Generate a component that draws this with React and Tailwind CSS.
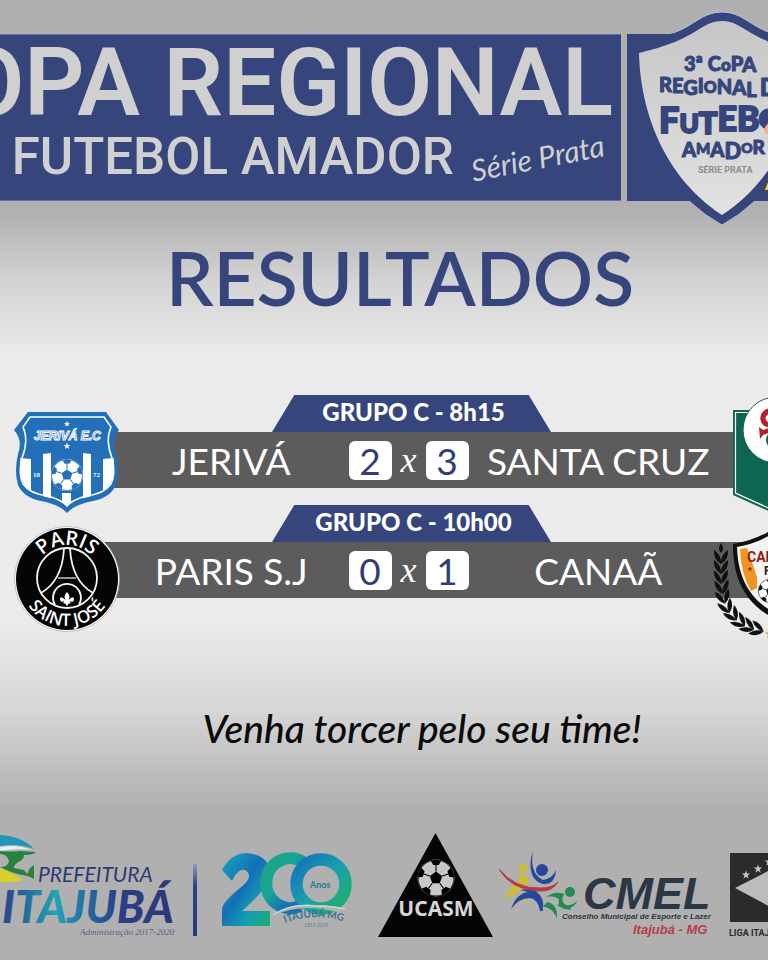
import React from "react";

const NAVY = "#36467d";

function Ball({ cx, cy, r, dark = "#000", light = "#dcdcdc" }) {
  const spokes = [0, 72, 144, 216, 288];
  return (
    <g transform={`translate(${cx} ${cy}) scale(${r / 20})`}>
      <circle r="20" fill={light} />
      <polygon points="0,-7 6.7,-2.2 4.1,5.7 -4.1,5.7 -6.7,-2.2" fill={dark} />
      {spokes.map((a) => (
        <g key={a} transform={`rotate(${a})`}>
          <path d="M0 -7V-14" stroke={dark} strokeWidth="1.2" />
          <path d="M-5.500 -18.5Q0 -20.500 5.500 -18.5L3 -14H-3Z" fill={dark} />
        </g>
      ))}
      <circle r="19.5" fill="none" stroke={dark} strokeWidth="1" />
    </g>
  );
}

function Star({ x, y, s, fill }) {
  return (
    <polygon
      transform={`translate(${x} ${y}) scale(${s})`}
      points="0,-10 2.4,-3.1 9.5,-3.1 3.8,1.2 5.9,8.1 0,4 -5.9,8.1 -3.8,1.2 -9.5,-3.1 -2.4,-3.1"
      fill={fill}
    />
  );
}

function CupShield() {
  return (
    <svg className="absolute -top-[34px] left-[3px] h-[230px] w-[190px]" viewBox="630 0 190 230" role="img" aria-label="3ª Copa Regional de Futebol Amador">
      <defs>
        <linearGradient id="cup" x1="0" y1="0" x2="0" y2="1">
          <stop offset="0" stopColor="#c6c6c6" />
          <stop offset="1" stopColor="#e2e2e2" />
        </linearGradient>
      </defs>
      <path d="M722 12C702 12 694 26 673 33L631 48C632 95 648 155 689 201Q705 216 722 225Q739 216 755 201C796 155 812 95 813 48L771 33C750 26 742 12 722 12Z" fill={NAVY} />
      <path d="M673 33C694 26 702 12 722 12S750 26 771 33M689 201Q705 216 722 225Q739 216 755 201" fill="none" stroke="#b9c4de" strokeWidth="1" />
      <path d="M722 21C706 21 699 32 675 42Q657 49 639 53C640 100 657 172 722 215C787 172 804 100 805 53Q787 49 769 42C745 32 738 21 722 21Z" fill="url(#cup)" />
      <g fill={NAVY} stroke={NAVY} strokeWidth="1" strokeLinejoin="round" fontFamily="Lato, sans-serif" fontWeight="900">
        <text x="684" y="71" fontSize="20">3ª C<tspan fontSize="17">o</tspan>P<tspan dy="1">A</tspan></text>
        <text x="659" y="92" fontSize="20">R<tspan dy="1">E</tspan><tspan dy="2">G</tspan><tspan dy="-2">I</tspan><tspan fontSize="16">O</tspan><tspan dy="1">N</tspan><tspan dy="1">A</tspan><tspan dy="2">L</tspan><tspan dx="3" dy="-1" fontSize="24">D</tspan></text>
        <text x="659" y="133" fontSize="36" strokeWidth="2">F<tspan fontSize="26">U</tspan><tspan dy="1" fontSize="31">T</tspan><tspan dy="-3" fontSize="34">E</tspan><tspan fontSize="34">B</tspan></text>
        <ellipse cx="768" cy="119" rx="9" ry="10" />
        <text x="682" y="157" fontSize="20">A<tspan fontSize="15" dy="-3">M</tspan><tspan dy="3">A</tspan><tspan dy="2" fontSize="22">D</tspan><tspan fontSize="14" dy="-6">O</tspan><tspan dy="1" fontSize="19">R</tspan></text>
      </g>
      <text x="698" y="173" fontSize="9" fontWeight="700" fill="#8d8f91" fontFamily="Roboto, sans-serif">SÉRIE PRATA</text>
      <path d="M764 132q0-7 7-11v16z" fill="#e9b48f" />
      <path d="M764 191l4-10 4 0v8z" fill="#f2d13a" stroke="#222" strokeWidth=".6" />
    </svg>
  );
}

function JerivaCrest() {
  return (
    <svg className="absolute -top-6 left-3 h-[108px] w-[110px]" viewBox="12 408 110 108" role="img" aria-label="Jerivá E.C">
      <defs>
        <clipPath id="jbody">
          <path d="M22 421Q27 428 25 438Q19 455 20 470Q22 492 42 496Q60 500 67 506Q74 500 92 496Q112 492 114 470Q115 455 109 438Q107 428 112 421Z" />
        </clipPath>
      </defs>
      <path d="M28 412H106L119 430Q111 440 116 454Q120 472 116 485Q110 499 88 502Q73 506 67 513Q61 506 46 502Q24 499 18 485Q14 472 18 454Q23 440 14 430Z" fill="#2470b8" />
      <path d="M30 417H104L111 427Q105 440 112 458Q116 474 111 484Q104 494 86 496Q72 500 67 506Q62 500 48 496Q30 494 23 484Q18 474 22 458Q29 440 23 427Z" fill="none" stroke="#fff" strokeWidth="1.5" />
      <g clipPath="url(#jbody)" fill="#fff">
        <path d="M20 458l11 1V500H20zM43 454l8-1V504H43zM62 493h9V512H62zM83 453l8 1V504H83zM103 459l11-1V500H103z" />
      </g>
      <Ball cx={67} cy={475} r={16} dark="#2470b8" light="#fff" />
      <g fill="#fff">
        <Star x={67} y={424} s={0.32} fill="#fff" />
        <Star x={67} y={446} s={0.36} fill="#fff" />
        <text x="34" y="440" fontSize="12" fontWeight="700" fontStyle="italic" fontFamily="'Liberation Sans', sans-serif" fill="#2470b8" stroke="#fff" strokeWidth="1">JERIVÁ E.C</text>
        <text x="33" y="477" fontSize="7" fontWeight="700" fontFamily="'Liberation Serif', serif">18</text>
        <text x="93" y="477" fontSize="7" fontWeight="700" fontFamily="'Liberation Serif', serif">72</text>
      </g>
    </svg>
  );
}

function ParisCrest() {
  return (
    <svg className="absolute -top-[18px] left-3 h-[110px] w-[110px]" viewBox="12 524 110 110" role="img" aria-label="Paris Saint José">
      <defs>
        <path id="ptop" d="M33 579A34 34 0 0 1 101 579" />
        <path id="pbot" d="M20 579A47 47 0 0 0 114 579" />
      </defs>
      <circle cx="67" cy="579" r="52.500" fill="#fff" stroke="#9a9a9a" strokeWidth=".6" />
      <circle cx="67" cy="579" r="51" fill="#050505" />
      <g fill="#fff" textAnchor="middle">
        <text fontSize="20" fontFamily="'Open Sans', sans-serif" fontWeight="600"><textPath href="#ptop" startOffset="50%">PARIS</textPath></text>
        <text fontSize="17" fontFamily="'Open Sans', sans-serif" fontWeight="600"><textPath href="#pbot" startOffset="50%">SAINT JOSÉ</textPath></text>
      </g>
      <g fill="none" stroke="#f4f4f4">
        <circle cx="67" cy="578" r="30" strokeWidth="1.800" />
        <path d="M64 549Q62 581 41 593M70 549Q72 581 93 593" strokeWidth="1.800" />
        <path d="M58 578H76" strokeWidth="1.200" />
        <path d="M55 605A14 14 0 1 1 79 605" strokeWidth="1.800" />
      </g>
      <path d="M67 592q4 4 1.500 8q5-5 5.500-1q0 3-3 3q1-2-1.500 0h1v1.500h-2l-1.500 3-1.500-3h-2V602h1q-2.500-2-1.500 0q-3 0-3-3q.5-4 5.500 1q-2.500-4 1.500-8z" fill="#fff" />
    </svg>
  );
}

function SantaCruzCrest() {
  return (
    <svg className="absolute -top-9 left-0 h-[120px] w-[90px]" viewBox="732 396 90 120" role="img" aria-label="Santa Cruz">
      <path d="M733 410H817V495L775 514L733 495Z" fill="#0e6650" />
      <path d="M735.500 412.500H815V493L775 511L735.500 493Z" fill="none" stroke="#fff" strokeWidth="1.200" />
      <circle cx="776" cy="430" r="33" fill="#fff" stroke="#0e6650" strokeWidth="1" />
      <path d="M772 408C757 408 757 427 769 427L772 423C763 423 764 413 772 414Z" fill="#b3232c" />
      <path d="M759 427l4 3 6-2 2 4-8 3-3 4z" fill="#b3232c" />
      <circle cx="775" cy="440" r="9" fill="#0e6650" />
    </svg>
  );
}

function CanaaCrest() {
  const leaves = [
    [721, 556, 0], [721, 566, 0], [721, 576, -2], [722, 586, -6], [723, 596, -14],
    [726, 606, -24], [732, 614, -36], [739, 621, -48], [747, 626, -60], [756, 629, -72],
  ];
  return (
    <svg className="absolute -top-[18px] -left-5 h-[120px] w-[120px]" viewBox="712 524 120 120" role="img" aria-label="Canaã F.C.">
      <path d="M777 526Q758 540 733 544C733 578 744 604 777 620C810 604 821 578 821 544Q796 540 777 526Z" fill="#101010" />
      <path d="M777 531Q759 543 737 547C738 577 749 600 777 614C805 600 816 577 817 547Q795 543 777 531Z" fill="#f6f4f1" />
      <path d="M740 549L747 548L757 577V588L751 591Q741 574 740 549Z" fill="#f2941f" />
      <Star x={750} y={569} s={0.26} fill="#8a1f24" />
      <text x="747" y="562" fontSize="14" fontWeight="700" fill="#8a1f24" fontFamily="Roboto, sans-serif">CANAÃ</text>
      <text x="764" y="575" fontSize="12" fontWeight="700" fill="#222" fontFamily="Roboto, sans-serif">F.C.</text>
      <Ball cx={770} cy={591} r={12} dark="#151515" light="#fff" />
      <path d="M721 543q4 6 0 10q-4-4 0-10z" fill="#111" />
      {leaves.map(([x, y, a]) => (
        <g key={x + y} transform={`translate(${x} ${y}) rotate(${a})`} fill="#111">
          <path d="M0 5Q-1-2-7-6Q-8 3 0 8Z" />
          <path d="M0 5Q1-2 7-6Q8 3 0 8Z" />
        </g>
      ))}
      <Star x={770} y={634} s={0.55} fill="#eda23a" />
    </svg>
  );
}

function Match({ label, home, away, homeGoals, awayGoals, homeCrest, awayCrest }) {
  return (
    <article>
      <div className="flex justify-center pl-[55px]">
        <h3 className="flex h-[37px] w-[279px] items-center justify-center bg-[#36467d] pb-1 pl-1 text-[24px] leading-7 font-black text-white [clip-path:polygon(8%_0,92%_0,100%_100%,0_100%)]">
          {label}
        </h3>
      </div>
      <div className="relative grid h-14 grid-cols-[118px_7fr_120px_8fr_36px] items-center">
        <div className="absolute inset-y-0 right-0 left-[60px] bg-[#5c5c5c]" />
        <div className="relative h-full">{homeCrest}</div>
        <span className="relative pr-1 text-center text-[37px] leading-none whitespace-nowrap text-white">{home}</span>
        <div className="relative flex items-center justify-between">
          <span className="flex h-[39px] w-[43px] items-center justify-center rounded-md bg-white text-[37px] leading-none text-[#2f3f76]">{homeGoals}</span>
          <span className="font-[Liberation_Serif,serif] text-[36px] leading-none text-white italic">x</span>
          <span className="flex h-[39px] w-[43px] items-center justify-center rounded-md bg-white text-[37px] leading-none text-[#2f3f76]">{awayGoals}</span>
        </div>
        <span className="relative pr-1 text-center text-[37px] leading-none whitespace-nowrap text-white">{away}</span>
        <div className="relative h-full">{awayCrest}</div>
      </div>
    </article>
  );
}

function PrefeituraLogo() {
  return (
    <svg className="h-[110px] w-[180px] shrink-0" viewBox="0 830 180 110" role="img" aria-label="Prefeitura Itajubá">
      <defs>
        <linearGradient id="ita" gradientUnits="userSpaceOnUse" x1="0" y1="0" x2="175" y2="0">
          <stop offset="0" stopColor="#2b3f86" />
          <stop offset=".14" stopColor="#246a9c" />
          <stop offset=".32" stopColor="#20a3b5" />
          <stop offset=".5" stopColor="#2569a3" />
          <stop offset=".68" stopColor="#2b3f86" />
          <stop offset="1" stopColor="#2b3877" />
        </linearGradient>
      </defs>
      <path d="M0 835Q22 836 34 849Q18 843 0 846Z" fill="#2196b8" />
      <path d="M0 847Q17 844 32 850Q16 848 0 851Z" fill="#e5eff0" />
      <path d="M0 851Q14 852 20 851L36 852Q34 855 24 855Q24 859 20 861Q13 865 14 868L24 870L27 874L30 868L34 865V879L28 876Q13 874 0 867Q8 867 9 861Q7 854 0 854Z" fill="#27823f" />
      <path d="M0 868Q11 872 23 880Q16 883 0 882Z" fill="#d9cf2a" />
      <text x="38" y="882" fontSize="21" fontStyle="italic" fill="#2c3973" fontFamily="Lato, sans-serif">PREFEITURA</text>
      <text x="2" y="923" fontSize="45" fontStyle="italic" fontWeight="900" fill="url(#ita)" fontFamily="Lato, sans-serif">ITAJUBÁ</text>
      <text x="80" y="935" fontSize="9" fontStyle="italic" fill="#56617f" fontFamily="'Liberation Serif', serif">Administração 2017-2020</text>
    </svg>
  );
}

function BicentenaryLogo() {
  return (
    <svg className="h-[90px] w-[140px] shrink-0" viewBox="220 850 140 90" role="img" aria-label="200 anos Itajubá MG">
      <defs>
        <linearGradient id="two" x1="0" y1="0" x2="1" y2="1">
          <stop offset="0" stopColor="#14a6c0" />
          <stop offset=".45" stopColor="#1470b6" />
          <stop offset=".7" stopColor="#129db4" />
          <stop offset="1" stopColor="#20ad72" />
        </linearGradient>
        <linearGradient id="zero" x1="0" y1="0" x2="1" y2="1">
          <stop offset="0" stopColor="#1fa38a" />
          <stop offset=".4" stopColor="#17a596" />
          <stop offset=".7" stopColor="#1773b4" />
          <stop offset="1" stopColor="#1773b4" />
        </linearGradient>
        <linearGradient id="zeroEnd" x1="0" y1="0" x2="1" y2="1">
          <stop offset="0" stopColor="#1672b8" />
          <stop offset=".5" stopColor="#1a9fae" />
          <stop offset="1" stopColor="#1fb164" />
        </linearGradient>
        <path id="itaArc" d="M285 923Q315 911 352 924" />
      </defs>
      <path d="M222 870Q231 853 247 853Q270 855 270 874Q269 888 242 911H270V926H222V908Q224 901 240 888Q250 880 249 875Q247 869 241 870Q236 872 232 881Z" fill="url(#two)" />
      <path d="M303 862A24 25 0 1 0 300 906" fill="none" stroke="url(#zero)" strokeWidth="12" />
      <circle cx="321" cy="884" r="24.500" fill="none" stroke="url(#zeroEnd)" strokeWidth="12.500" />
      <path d="M272 917Q290 902 315 905Q335 905 347 910L340 913Q315 906 296 909Q282 911 272 917Z" fill="#b0b0b0" />
      <path d="M273 915Q290 903 315 906Q333 906 345 909" fill="none" stroke="#c5d8df" strokeWidth="1.500" />
      <text x="310" y="888" fontSize="9" fontWeight="700" fill="#207a98" fontFamily="Lato, sans-serif">Anos</text>
      <text fontSize="10" fontWeight="700" fill="#3c7293" fontFamily="Lato, sans-serif"><textPath href="#itaArc">ITAJUBÁ MG</textPath></text>
      <text x="304" y="927" fontSize="5" fill="#5f8598" fontFamily="Lato, sans-serif">1819 2019</text>
    </svg>
  );
}

function UcasmLogo() {
  return (
    <svg className="h-[104px] w-[116px] shrink-0" viewBox="378 833 116 104" role="img" aria-label="UCASM">
      <path d="M435.500 833L493 937H378Z" fill="#050505" />
      <Ball cx={436} cy={878} r={18.5} light="#c8c8c8" />
      <text x="436" y="916" fontSize="21" fontWeight="700" fill="#d6d6d6" textAnchor="middle" fontFamily="'Noto Sans', sans-serif">UCASM</text>
    </svg>
  );
}

function CmelLogo() {
  return (
    <svg className="h-[90px] w-[220px] shrink-0" viewBox="498 850 220 90" role="img" aria-label="CMEL">
      <g fill="#cbbd35">
        <circle cx="523" cy="868" r="4.500" />
        <path d="M518 874Q530 873 528 884Q525 889 515 889Q508 893 503 902Q506 889 515 885L520 880ZM513 887Q519 886 520 892Q512 894 507 901Q511 894 513 887ZM524 889L526 902L523 903Z" />
      </g>
      <g fill="#27479c">
        <circle cx="542" cy="870" r="6" />
        <path d="M533 851Q529 873 543 880Q553 878 556 870Q555 885 543 884Q528 880 531 858ZM511 909Q517 892 530 892Q543 893 543 911L540 911Q538 899 530 898Q519 898 511 909ZM520 890Q533 887 537 892Q544 898 543 907Q538 893 520 890Z" />
      </g>
      <path d="M499 869Q515 889 541 888Q552 888 558 882Q552 892 539 891Q511 890 499 869Z" fill="#b83843" stroke="#b83843" strokeWidth="1" />
      <g fill="#238a50">
        <circle cx="570" cy="892" r="5" />
        <path d="M545 898Q555 890 564 894Q560 902 566 905Q573 906 578 900Q574 909 564 909Q557 905 559 899Q551 894 545 898ZM547 902Q558 904 557 918Q552 907 541 906Q545 906 547 902ZM560 904Q571 906 571 910Q562 909 557 905Z" />
      </g>
      <g fontFamily="'Liberation Sans', sans-serif" fontWeight="700" fontStyle="italic">
        <text x="583" y="909" fontSize="45" fill="#2b3744">CMEL</text>
        <text x="562" y="919" fontSize="8" fill="#2b3744">Conselho Municipal de Esporte e Lazer</text>
        <text x="633" y="934" fontSize="13" fill="#b83b46">Itajubá - MG</text>
      </g>
    </svg>
  );
}

function LigaLogo() {
  return (
    <svg className="h-[90px] w-[90px] shrink-0" viewBox="729 850 90 90" role="img" aria-label="Liga Itajubense">
      <rect x="730" y="853" width="78" height="69" fill="#2c2a2b" />
      <path d="M735 888L778 866V911Z" fill="#bcbcbc" />
      <Star x={746} y={875} s={0.45} fill="#c4c4c4" />
      <Star x={758} y={869} s={0.45} fill="#c4c4c4" />
      <Star x={769} y={862} s={0.45} fill="#c4c4c4" />
      <text x="729" y="936" fontSize="9" fontWeight="700" fill="#2c2a2b" fontFamily="Roboto, sans-serif">LIGA ITAJ</text>
    </svg>
  );
}

export default function App() {
  return (
    <main className="min-h-screen w-full overflow-hidden bg-[linear-gradient(180deg,#b0b0b0_0,#b0b0b0_22%,#d2d2d2_29%,#ebebeb_37%,#ebebeb_65%,#d6d6d6_74%,#b0b0b0_84%,#b0b0b0_100%)] pt-[34px] font-[Lato,sans-serif]">
      <header className="grid h-[167px] grid-cols-[minmax(0,1fr)_141px] gap-[6px] text-[#d0d0d0]">
        <div className="overflow-hidden border-y border-[#5d6fa5] bg-[#36467d] pr-2">
          <h1 className="flex justify-end text-[94px] leading-[96px] font-semibold whitespace-nowrap font-[Roboto,sans-serif]">OPA REGIONAL</h1>
          <div className="flex items-center justify-end gap-4 pr-2 whitespace-nowrap">
            <p className="text-[51px] leading-[52px] font-medium font-[Roboto,sans-serif]">FUTEBOL AMADOR</p>
            <p className="-rotate-[11deg] text-[30px] leading-10 italic">Série Prata</p>
          </div>
        </div>
        <div className="relative bg-[#36467d]">
          <CupShield />
        </div>
      </header>

      <h2 className="pt-9 pl-8 text-center text-[75px] leading-[80px] font-semibold text-[#36467d]">RESULTADOS</h2>

      <section className="mt-[78px] flex flex-col gap-[17px]" aria-label="Resultados">
        <Match label="GRUPO C - 8h15" home="JERIVÁ" away="SANTA CRUZ" homeGoals="2" awayGoals="3" homeCrest={<JerivaCrest />} awayCrest={<SantaCruzCrest />} />
        <Match label="GRUPO C - 10h00" home="PARIS S.J" away="CANAÃ" homeGoals="0" awayGoals="1" homeCrest={<ParisCrest />} awayCrest={<CanaaCrest />} />
      </section>

      <p className="mt-[100px] pl-[76px] text-center text-[39px] leading-[60px] font-medium text-[#0b0b0b] italic">Venha torcer pelo seu time!</p>

      <footer className="mt-[72px] flex items-end">
        <PrefeituraLogo />
        <div className="mb-1 ml-[13px] h-[72px] w-1 shrink-0 bg-linear-to-b from-[#8f9bb5] via-[#2d4384] via-30% to-[#2b3877]" />
        <div className="ml-[23px] flex shrink-0 items-end">
          <BicentenaryLogo />
          <div className="ml-[18px] mb-[3px] shrink-0"><UcasmLogo /></div>
          <div className="ml-1 shrink-0"><CmelLogo /></div>
          <div className="ml-[11px] shrink-0"><LigaLogo /></div>
        </div>
      </footer>
    </main>
  );
}
